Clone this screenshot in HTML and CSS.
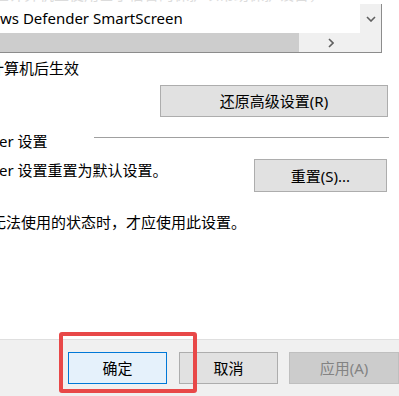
FILE: index.html
```html
<!DOCTYPE html>
<html lang="zh-CN">
<head>
<meta charset="utf-8">
<link rel="stylesheet" href="styles.css">
</head>
<body>
<div class="page">
  <div class="main">
    <div class="faint"><div class="faint-text">在计算机上使用基于信誉的保护以帮助保护设备，Windows</div></div>
    <div class="listbox">
      <div class="list-item">ws Defender SmartScreen</div>
      <div class="vscroll">
        <svg width="10" height="6" viewBox="0 0 10 6"><path d="M1 1 L5 5 L9 1" fill="none" stroke="#606060" stroke-width="1.6"/></svg>
      </div>
      <div class="hscroll">
        <div class="thumb"></div>
        <div class="harrow">
          <svg width="6" height="10" viewBox="0 0 6 10"><path d="M1 1 L5 5 L1 9" fill="none" stroke="#606060" stroke-width="1.6"/></svg>
        </div>
      </div>
      <div class="corner"></div>
    </div>
    <div class="line restart">计算机后生效</div>
    <div class="row-right">
      <button class="btn wide">还原高级设置(R)</button>
    </div>
    <div class="group-head">
      <span class="group-title">er 设置</span>
      <span class="group-rule"></span>
    </div>
    <div class="reset-row">
      <span class="reset-text">er 设置重置为默认设置。</span>
      <button class="btn reset">重置(S)...</button>
    </div>
    <div class="line note">无法使用的状态时，才应使用此设置。</div>
  </div>
  <div class="footer">
    <button class="btn ok">确定</button>
    <button class="btn">取消</button>
    <button class="btn disabled">应用(A)</button>
    <div class="highlight"></div>
  </div>
</div>
</body>
</html>
```
FILE: styles.css
```css
html, body {
  margin: 0;
  padding: 0;
  background: #ffffff;
}
body {
  width: 399px;
  height: 396px;
  overflow: hidden;
  font-family: "Noto Sans", "Noto Sans CJK SC", sans-serif;
  font-size: 15px;
  color: #000;
}
.page {
  position: relative;
  width: 399px;
  height: 396px;
  display: flex;
  flex-direction: column;
  overflow: hidden;
}
.main {
  height: 339px;
  display: flex;
  flex-direction: column;
}
.faint {
  height: 4px;
  overflow: hidden;
}
.faint-text {
  margin-top: -15px;
  margin-left: -6px;
  line-height: 18px;
  color: #dcdcdc;
  white-space: nowrap;
}
.listbox {
  width: 382px;
  height: 49px;
  box-sizing: border-box;
  border-right: 1px solid #8c8c8c;
  border-bottom: 1px solid #8c8c8c;
  display: grid;
  grid-template-columns: 360px 21px;
  grid-template-rows: 29px 19px;
}
.list-item {
  background: #fff;
  line-height: 29px;
  white-space: nowrap;
  overflow: hidden;
}
.vscroll, .corner {
  background: #f0f0f0;
}
.vscroll {
  display: flex;
  justify-content: center;
  align-items: center;
}
.hscroll {
  background: #f0f0f0;
  display: flex;
}
.thumb {
  width: 299px;
  background: #cdcdcd;
}
.harrow {
  flex: 1;
  display: flex;
  align-items: center;
  justify-content: center;
  padding-left: 2px;
}
.line {
  line-height: 22px;
  white-space: nowrap;
}
.restart {
  margin-top: 4px;
  margin-left: -11px;
}
.row-right {
  display: flex;
  margin-top: 6px;
  padding-left: 160px;
}
.btn {
  font-family: "Noto Sans", "Noto Sans CJK SC", sans-serif;
  font-size: 15px;
  color: #000;
  background: #e1e1e1;
  border: 1px solid #adadad;
  height: 32px;
  width: 110px;
  padding: 0;
  margin: 0;
  box-sizing: border-box;
  line-height: 28px;
}
.btn.wide {
  width: 228px;
}
.group-head {
  margin-top: 13px;
  display: flex;
  align-items: flex-start;
  height: 22px;
}
.group-title {
  line-height: 22px;
  white-space: nowrap;
  width: 95px;
  margin-left: -1px;
}
.group-rule {
  width: 295px;
  margin-top: 7px;
  border-top: 1px solid #a0a0a0;
}
.reset-row {
  margin-top: 7px;
  display: flex;
  align-items: flex-start;
}
.reset-text {
  width: 255px;
  margin-left: -1px;
  line-height: 22px;
  white-space: nowrap;
}
.btn.reset {
  width: 133px;
  height: 33px;
}
.note {
  margin-top: 19px;
  margin-left: -9px;
}
.footer {
  flex: 1;
  background: #f0f0f0;
  border-top: 1px solid #dfdfdf;
  display: flex;
  gap: 12px;
  padding: 12px 0 0 68px;
  box-sizing: border-box;
}
.btn.ok {
  background: #e5f1fb;
  border-color: #0078d7;
}
.btn.disabled {
  flex: none;
  background: #cccccc;
  border-color: #bfbfbf;
  color: #838383;
  margin-left: -1px;
}
.highlight {
  position: absolute;
  left: 59px;
  top: 332px;
  width: 138px;
  height: 61px;
  box-sizing: border-box;
  border: 4px solid #e84848;
  border-radius: 3px;
}
```
